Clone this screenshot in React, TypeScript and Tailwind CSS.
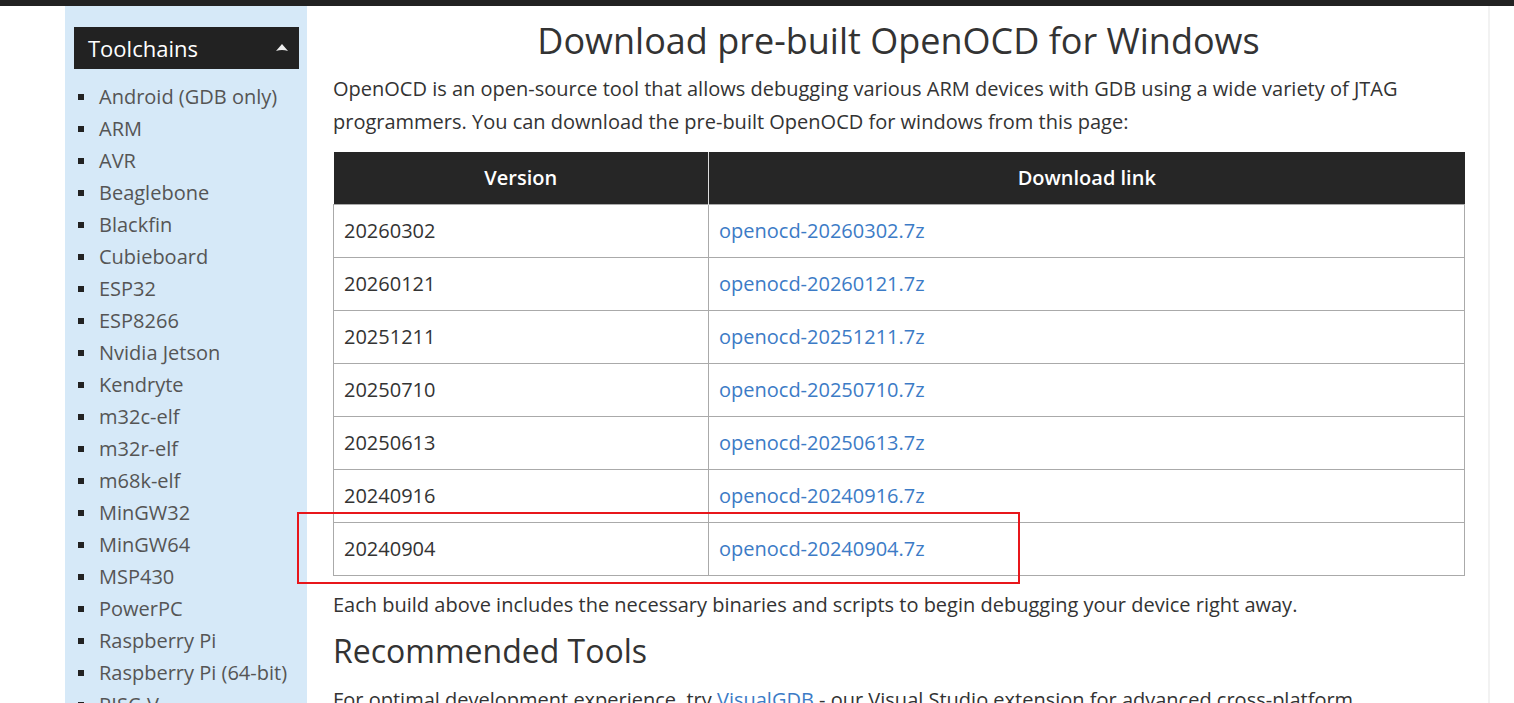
const toolchains = [
  'Android (GDB only)',
  'ARM',
  'AVR',
  'Beaglebone',
  'Blackfin',
  'Cubieboard',
  'ESP32',
  'ESP8266',
  'Nvidia Jetson',
  'Kendryte',
  'm32c-elf',
  'm32r-elf',
  'm68k-elf',
  'MinGW32',
  'MinGW64',
  'MSP430',
  'PowerPC',
  'Raspberry Pi',
  'Raspberry Pi (64-bit)',
  'RISC-V',
];

const versions = ['20260302', '20260121', '20251211', '20250710', '20250613', '20240916', '20240904'];

export default function App() {
  return (
    <div className="h-[703px] overflow-hidden bg-white font-['Open_Sans',sans-serif] text-[#333]">
      <div className="h-[6px] bg-[#222]" />
      <div className="flex">
        <aside className="ml-[65px] w-[242px] shrink-0 bg-[#d6e9f8] pl-[9px] pr-[8px] pt-[21px] min-h-[700px]">
          <div className="flex h-[42px] items-center justify-between bg-[#222] pl-[14px] pr-[10px] text-[22px] text-white">
            <span>Toolchains</span>
            <svg width="14" height="10" viewBox="0 0 14 10">
              <path d="M7 1 L13 8 Q7 6 1 8 Z" fill="#eee" />
            </svg>
          </div>
          <ul className="mt-[12px] text-[20px] leading-[32px] text-[#555]">
            {toolchains.map((t) => (
              <li key={t} className="flex items-center">
                <span className="ml-[4px] mr-[15px] h-[6px] w-[6px] bg-[#222]" />
                <span>{t}</span>
              </li>
            ))}
          </ul>
        </aside>
        <main className="relative w-[1183px] border-r-2 border-[#f2f2f2] px-[26px] pr-[24px]">
          <h1 className="pt-[9px] text-center text-[36px] leading-[52px]">
            Download pre-built OpenOCD for Windows
          </h1>
          <p className="mt-[5px] text-[20px] leading-[33px]">
            OpenOCD is an open-source tool that allows debugging various ARM devices with GDB using a wide variety of JTAG
            programmers. You can download the pre-built OpenOCD for windows from this page:
          </p>
          <table className="mt-[14px] w-[1132px] border-collapse text-[20px]">
            <thead>
              <tr className="h-[52px] bg-[#262626] text-white">
                <th className="w-[375px] border-r border-[#ddd] font-semibold">Version</th>
                <th className="font-semibold">Download link</th>
              </tr>
            </thead>
            <tbody>
              {versions.map((v) => (
                <tr key={v} className="h-[53px]">
                  <td className="border border-[#aaa] pl-[10px]">{v}</td>
                  <td className="border border-[#aaa] pl-[10px]">
                    <a className="text-[#3c7bc6]">openocd-{v}.7z</a>
                  </td>
                </tr>
              ))}
            </tbody>
          </table>
          <div className="absolute left-[-10px] top-[506px] h-[72px] w-[723px] border-2 border-[#e8161b]" />
          <p className="mt-[12px] text-[20px] leading-[33px]">
            Each build above includes the necessary binaries and scripts to begin debugging your device right away.
          </p>
          <h2 className="mt-[8px] text-[32px] leading-[44px]">Recommended Tools</h2>
          <p className="mt-[10px] text-[20px] leading-[33px]">
            For optimal development experience, try <a className="text-[#3c7bc6]">VisualGDB</a> - our Visual Studio
            extension for advanced cross-platform
          </p>
        </main>
      </div>
    </div>
  );
}
